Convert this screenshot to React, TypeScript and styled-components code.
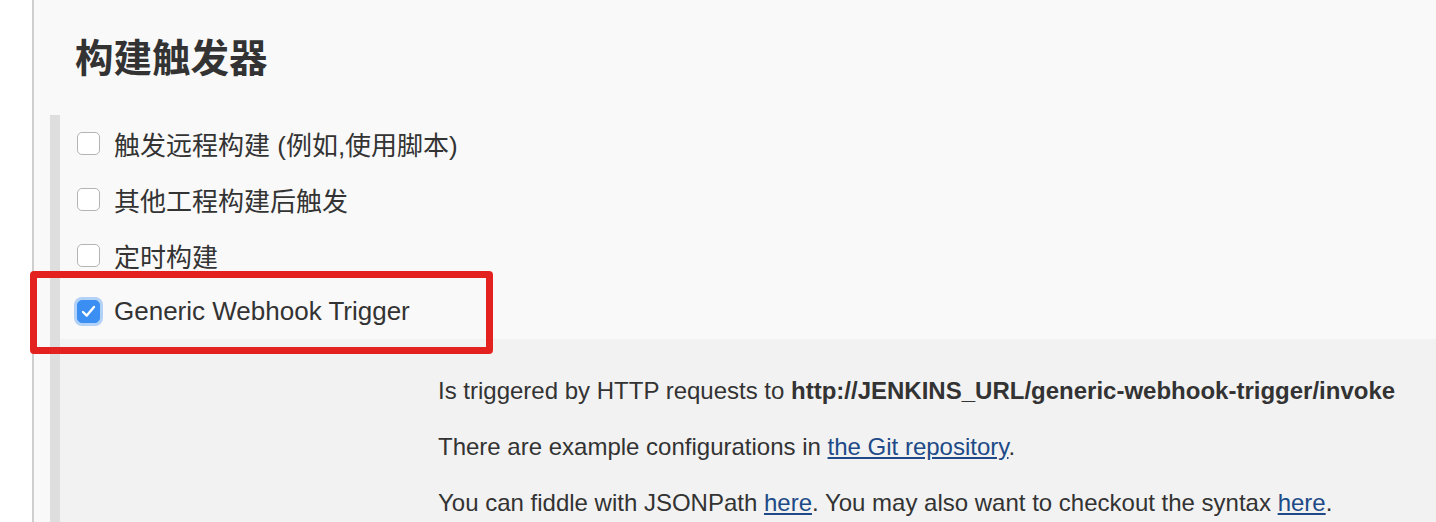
import React from "react";
import styled, { createGlobalStyle } from "styled-components";

const Global = createGlobalStyle`
  html, body { margin: 0; padding: 0; background: #ffffff; }
  body { font-family: "Liberation Sans", "Noto Sans CJK SC", Arial, sans-serif; color: #333; }
`;

const Page = styled.div`
  display: flex;
  height: 522px;
  overflow: hidden;
  padding-left: 32px;
`;

const Section = styled.section`
  flex: 1;
  background: #f9f9f9;
  border-left: 2px solid #cfcfcf;
  padding-left: 10px;
  padding-top: 19px;
  display: flex;
  flex-direction: column;
`;

const Rule = styled.div`
  height: 2px;
  background: #dcdcdc;
`;

const Heading = styled.h2`
  margin: 8px 0 32px 31px;
  font-family: "Noto Sans CJK SC", "Liberation Sans", sans-serif;
  font-size: 38.5px;
  line-height: 56px;
  font-weight: 700;
  color: #333;
`;

const Body = styled.div`
  position: relative;
  margin-left: 6px;
  border-left: 10px solid #dedede;
  flex: 1;
  display: flex;
  flex-direction: column;
`;

const Row = styled.label`
  display: flex;
  align-items: center;
  gap: 14px;
  height: 56px;
  padding-left: 17px;
  font-size: 26px;
  color: #333;
`;

const Box = styled.span<{ $checked?: boolean }>`
  box-sizing: border-box;
  width: 23px;
  height: 23px;
  border-radius: 5px;
  flex: none;
  display: flex;
  align-items: center;
  justify-content: center;
  background: ${(p) => (p.$checked ? "#3b8ef2" : "#ffffff")};
  border: 1px solid ${(p) => (p.$checked ? "#3b8ef2" : "#b4b4b4")};
  box-shadow: ${(p) => (p.$checked ? "0 0 0 3px rgba(90, 160, 245, 0.45)" : "none")};
`;

const Panel = styled.div`
  flex: 1;
  background: #f2f2f2;
  padding: 24px 0 0 378px;
`;

const Line = styled.p`
  margin: 0;
  font-size: 24px;
  line-height: 56px;
  color: #333;
  white-space: nowrap;
`;

const Link = styled.a`
  color: #204a87;
  text-decoration: underline;
`;

const Highlight = styled.div`
  position: absolute;
  left: -30px;
  top: 156px;
  width: 463px;
  height: 83px;
  box-sizing: border-box;
  border: 7px solid #e32220;
  border-radius: 4px;
  pointer-events: none;
`;

const Check = () => (
  <svg width="15" height="13" viewBox="0 0 15 13" fill="none">
    <path d="M2 7 L5.8 10.6 L13 2" stroke="#fff" strokeWidth="2.4" strokeLinecap="round" strokeLinejoin="round" />
  </svg>
);

const options = [
  { label: "触发远程构建 (例如,使用脚本)", checked: false },
  { label: "其他工程构建后触发", checked: false },
  { label: "定时构建", checked: false },
  { label: "Generic Webhook Trigger", checked: true },
];

export default function App() {
  return (
    <>
      <Global />
      <Page>
        <Section>
          <Rule />
          <Heading>构建触发器</Heading>
          <Body>
            {options.map((o) => (
              <Row key={o.label}>
                <Box $checked={o.checked}>{o.checked && <Check />}</Box>
                {o.label}
              </Row>
            ))}
            <Panel>
              <Line>
                Is triggered by HTTP requests to <b>http://JENKINS_URL/generic-webhook-trigger/invoke</b>
              </Line>
              <Line>
                There are example configurations in <Link href="#">the Git repository</Link>.
              </Line>
              <Line>
                You can fiddle with JSONPath <Link href="#">here</Link>. You may also want to checkout the syntax{" "}
                <Link href="#">here</Link>.
              </Line>
            </Panel>
            <Highlight />
          </Body>
        </Section>
      </Page>
    </>
  );
}
